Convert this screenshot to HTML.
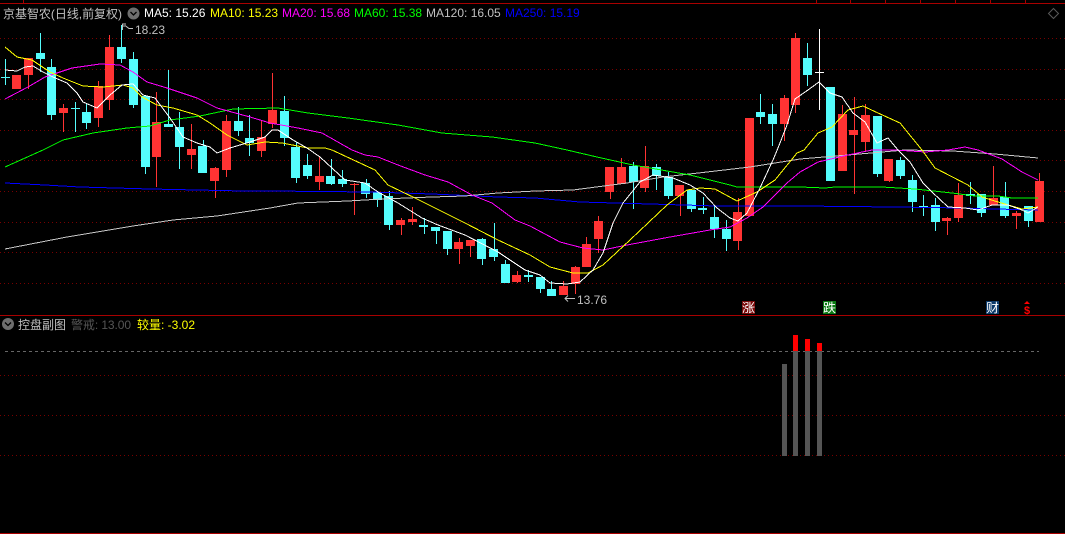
<!DOCTYPE html>
<html lang="zh"><head><meta charset="utf-8"><title>京基智农</title>
<style>
html,body{margin:0;padding:0;background:#000;width:1065px;height:534px;overflow:hidden}
svg{display:block}
text{font-family:"Liberation Sans","WenQuanYi Zen Hei","Noto Sans CJK SC",sans-serif;font-size:12px}
.ma{fill:none;stroke-width:1;shape-rendering:crispEdges}
</style></head><body>
<svg width="1065" height="534" viewBox="0 0 1065 534" xmlns="http://www.w3.org/2000/svg">
<rect width="1065" height="534" fill="#000"/>
<g stroke="#780000" stroke-width="1" stroke-dasharray="1 3" shape-rendering="crispEdges">
<path d="M0 38.5H1065M0 69.5H1065M0 99.5H1065M0 130.5H1065M0 160.5H1065M0 191.5H1065M0 222.5H1065M0 252.5H1065M0 283.5H1065M0 375.5H1065M0 415.5H1065M0 455.5H1065"/>
</g>
<g fill="#a80000" shape-rendering="crispEdges">
<rect x="0" y="3" width="1065" height="1"/><rect x="0" y="315" width="1065" height="1"/><rect x="0" y="533" width="1065" height="1"/>
<rect x="23" y="0" width="1" height="3"/><rect x="816" y="0" width="1" height="3"/><rect x="850" y="0" width="1" height="3"/><rect x="885" y="0" width="1" height="3"/><rect x="920" y="0" width="1" height="3"/><rect x="955" y="0" width="1" height="3"/><rect x="990" y="0" width="1" height="3"/><rect x="1025" y="0" width="1" height="3"/>
</g>
<path shape-rendering="crispEdges" fill="#54fcfc" d="M5 59h1V85h-1zM1 77h9V78h-9zM40 33h1V72h-1zM36 53h9V59h-9zM51 59h1V120h-1zM47 67h9V115h-9zM75 102h1V132h-1zM71 108h9V109h-9zM86 103h1V129h-1zM82 112h9V123h-9zM121 25h1V63h-1zM117 47h9V59h-9zM133 52h1V108h-1zM129 59h9V105h-9zM145 96h1V174h-1zM141 96h9V167h-9zM168 70h1V127h-1zM164 124h9V127h-9zM179 112h1V169h-1zM175 127h9V147h-9zM203 140h1V173h-1zM198 146h9V173h-9zM238 107h1V136h-1zM234 121h9V131h-9zM249 115h1V156h-1zM245 138h9V143h-9zM284 96h1V146h-1zM280 111h9V138h-9zM296 142h1V183h-1zM291 147h9V178h-9zM307 154h1V179h-1zM303 165h9V176h-9zM331 159h1V185h-1zM326 176h9V184h-9zM342 170h1V187h-1zM338 179h9V184h-9zM366 179h1V198h-1zM361 183h9V194h-9zM377 192h1V207h-1zM373 192h9V200h-9zM389 191h1V230h-1zM384 196h9V225h-9zM424 218h1V234h-1zM419 225h9V227h-9zM436 227h1V244h-1zM431 227h9V231h-9zM447 231h1V255h-1zM443 231h9V249h-9zM482 238h1V265h-1zM477 239h9V259h-9zM494 223h1V261h-1zM489 249h9V257h-9zM505 260h1V283h-1zM501 264h9V283h-9zM528 270h1V282h-1zM524 275h9V277h-9zM540 277h1V293h-1zM536 277h9V289h-9zM551 281h1V296h-1zM547 289h9V296h-9zM633 162h1V209h-1zM629 166h9V182h-9zM656 164h1V190h-1zM652 167h9V176h-9zM668 172h1V199h-1zM664 177h9V196h-9zM691 190h1V212h-1zM687 190h9V209h-9zM703 197h1V214h-1zM698 208h9V210h-9zM714 206h1V238h-1zM710 217h9V229h-9zM726 220h1V251h-1zM722 229h9V239h-9zM760 94h1V124h-1zM756 112h9V117h-9zM772 104h1V146h-1zM768 114h9V124h-9zM807 43h1V86h-1zM803 58h9V75h-9zM830 87h1V181h-1zM826 87h9V181h-9zM877 116h1V177h-1zM873 116h9V174h-9zM900 157h1V179h-1zM896 160h9V176h-9zM912 175h1V212h-1zM908 180h9V202h-9zM923 195h1V216h-1zM919 206h9V208h-9zM935 198h1V231h-1zM931 205h9V222h-9zM970 182h1V204h-1zM966 194h9V196h-9zM981 194h1V217h-1zM977 194h9V213h-9zM1005 182h1V218h-1zM1000 197h9V216h-9zM1028 206h1V227h-1zM1024 206h9V221h-9z"/>
<path shape-rendering="crispEdges" fill="#ff3333" d="M12 75h9V89h-9zM28 58h1V89h-1zM24 58h9V75h-9zM63 104h1V132h-1zM59 108h9V113h-9zM98 81h1V127h-1zM94 86h9V118h-9zM109 35h1V110h-1zM105 47h9V100h-9zM156 92h1V187h-1zM152 122h9V157h-9zM191 124h1V169h-1zM187 149h9V155h-9zM215 167h1V198h-1zM210 168h9V181h-9zM226 115h1V177h-1zM222 121h9V170h-9zM261 120h1V157h-1zM257 137h9V151h-9zM272 73h1V128h-1zM268 110h9V124h-9zM319 157h1V190h-1zM315 176h9V182h-9zM354 183h1V215h-1zM350 184h9V185h-9zM401 218h1V235h-1zM396 220h9V225h-9zM412 207h1V225h-1zM408 219h9V222h-9zM459 238h1V264h-1zM454 242h9V249h-9zM470 240h1V257h-1zM466 240h9V246h-9zM517 271h1V283h-1zM512 275h9V282h-9zM563 281h1V295h-1zM559 286h9V295h-9zM575 266h1V294h-1zM571 267h9V284h-9zM586 237h1V267h-1zM582 244h9V267h-9zM598 216h1V253h-1zM594 221h9V239h-9zM610 167h1V199h-1zM605 167h9V192h-9zM621 158h1V184h-1zM617 167h9V184h-9zM645 146h1V192h-1zM640 166h9V188h-9zM680 185h1V216h-1zM675 185h9V196h-9zM738 198h1V250h-1zM733 212h9V241h-9zM749 118h1V216h-1zM745 118h9V216h-9zM784 95h1V141h-1zM780 98h9V124h-9zM795 33h1V113h-1zM791 38h9V105h-9zM842 105h1V171h-1zM838 114h9V171h-9zM854 97h1V194h-1zM849 130h9V135h-9zM865 104h1V151h-1zM861 115h9V142h-9zM889 159h1V182h-1zM884 159h9V181h-9zM947 217h1V235h-1zM942 218h9V221h-9zM958 183h1V222h-1zM954 195h9V218h-9zM993 166h1V205h-1zM989 198h9V205h-9zM1016 211h1V229h-1zM1012 213h9V216h-9zM1039 173h1V222h-1zM1035 181h9V222h-9z"/>
<path shape-rendering="crispEdges" fill="#fff" d="M819 29h1V110h-1zM815 72h9V73h-9z"/>
<polyline class="ma" stroke="#0000ff" points="5,183 45,185 80,187 115,188 150,189 197,190 243,191 270,191 372,192 432,194 498,197 535,198 580,202 650,204 717,206 800,206 895,207 962,208 995,209 1038,210"/>
<polyline class="ma" stroke="#c8c8c8" points="5,249 67,237 133,226 173,220 217,216 270,208 298,203 348,201 382,199 432,197 465,196 498,193 535,191 573,190 627,183 663,177 707,172 750,167 800,159 848,155 905,150 953,151 995,154 1038,158"/>
<polyline class="ma" stroke="#00ff00" points="5,167 43,150 63,140 93,133 127,128 150,126 170,120 200,116 233,109 278,108 308,113 348,118 398,125 442,133 492,137 535,143 567,150 597,157 633,165 690,175 730,185 737,187 800,187 825,188 835,187 882,187 915,189 952,193 975,196 998,196 1012,198 1038,198"/>
<polyline class="ma" stroke="#ff00ff" points="5,99 28,87 45,77 72,68 100,64 120,65 133,72 147,82 167,88 197,98 217,108 250,117 270,123 298,128 322,133 352,150 365,155 378,157 398,165 425,175 448,182 472,195 492,203 515,220 530,226 560,242 583,248 603,250 627,245 670,237 710,230 730,227 747,218 763,207 787,183 800,172 818,162 848,155 872,150 895,150 925,152 948,150 965,147 978,150 1002,159 1022,172 1038,180"/>
<polyline class="ma" stroke="#ffff00" points="5,47 17,57 32,60 50,72 63,78 83,86 103,87 123,85 133,88 142,97 157,105 173,108 197,115 210,123 227,135 247,145 265,142 282,143 308,148 325,148 332,150 375,170 388,185 415,198 465,223 498,240 530,255 550,267 573,273 588,273 603,265 630,240 667,205 687,190 700,188 715,189 737,201 757,192 775,180 797,153 804,150 818,133 832,127 848,110 863,106 878,113 900,123 922,150 935,168 968,185 982,197 998,202 1022,209 1038,207"/>
<polyline class="ma" stroke="#ffffff" points="5,70 17,71 25,67 33,66 43,72 53,77 67,83 77,93 83,102 97,108 110,95 122,85 133,84 143,95 155,98 170,118 183,137 197,143 210,147 217,153 230,148 250,142 265,137 272,130 278,130 293,140 307,148 320,157 345,180 365,183 378,192 398,203 422,218 438,225 465,235 498,252 525,270 540,275 550,283 567,284 580,282 593,270 603,253 613,223 623,203 640,182 653,175 673,178 690,185 703,193 717,208 730,218 738,221 747,213 760,188 773,160 778,148 787,125 795,99 808,90 819,82 830,93 842,97 853,113 865,122 877,143 888,138 898,150 910,162 923,183 932,192 948,207 965,208 978,210 992,205 1008,205 1022,210 1028,213 1038,207"/>
<path d="M5 351.5H1039" stroke="#666" stroke-dasharray="3 3" shape-rendering="crispEdges"/>
<g shape-rendering="crispEdges">
<rect x="782" y="364" width="5" height="92" fill="#555"/><rect x="793" y="351" width="5" height="105" fill="#555"/><rect x="805" y="351" width="5" height="105" fill="#555"/><rect x="817" y="351" width="5" height="105" fill="#555"/>
<rect x="793" y="335" width="5" height="16" fill="#f00"/><rect x="805" y="339" width="5" height="12" fill="#f00"/><rect x="817" y="343" width="5" height="8" fill="#f00"/>
</g>
<text x="3" y="18" fill="#c0c0c0" textLength="119" lengthAdjust="spacing">京基智农(日线,前复权)</text>
<circle cx="133.5" cy="13.5" r="6" fill="#6e6e6e"/><path d="M130.5 12l3 3 3-3" fill="none" stroke="#000" stroke-width="1.3"/>
<text x="144" y="17" fill="#fff">MA5: 15.26</text>
<text x="210" y="17" fill="#ffff00">MA10: 15.23</text>
<text x="282" y="17" fill="#ff00ff">MA20: 15.68</text>
<text x="354" y="17" fill="#00ff00">MA60: 15.38</text>
<text x="426" y="17" fill="#c0c0c0">MA120: 16.05</text>
<text x="505" y="17" fill="#0000ff">MA250: 15.19</text>
<path d="M1053.5 8.5l5 5-5 5-5-5z" fill="none" stroke="#5a5a5a"/>
<path d="M122.5 30V24H126M122.5 26H125M125 25.5L129 28.5H133" fill="none" stroke="#c0c0c0"/>
<text x="135" y="34" fill="#c0c0c0">18.23</text>
<path d="M575 298.500H565M568 295.500L565 298.500L568 301.500" fill="none" stroke="#c0c0c0"/>
<text x="577" y="304" fill="#c0c0c0">13.76</text>
<rect x="742" y="301" width="13" height="13" fill="#7a0a0a"/><text x="742" y="312" fill="#fff" textLength="13" lengthAdjust="spacingAndGlyphs">涨</text>
<rect x="823" y="301" width="13" height="13" fill="#0b7a14"/><text x="823" y="312" fill="#fff" textLength="13" lengthAdjust="spacingAndGlyphs">跌</text>
<rect x="986" y="301" width="13" height="13" fill="#0c3a6a"/><text x="986" y="312" fill="#fff" textLength="13" lengthAdjust="spacingAndGlyphs">财</text>
<path d="M1027 301l3 3h-6z" fill="#f00"/><text x="1024" y="314" fill="#f00" font-weight="bold" style="font-size:11px">$</text>
<circle cx="8" cy="324" r="6" fill="#6e6e6e"/><path d="M5 322.5l3 3 3-3" fill="none" stroke="#000" stroke-width="1.3"/>
<text x="18" y="329" fill="#c0c0c0" textLength="48" lengthAdjust="spacing">控盘副图</text>
<text x="71" y="329" fill="#555" textLength="60" lengthAdjust="spacing">警戒: 13.00</text>
<text x="137" y="329" fill="#ffff00" textLength="58" lengthAdjust="spacing">较量: -3.02</text>
</svg>
</body></html>
